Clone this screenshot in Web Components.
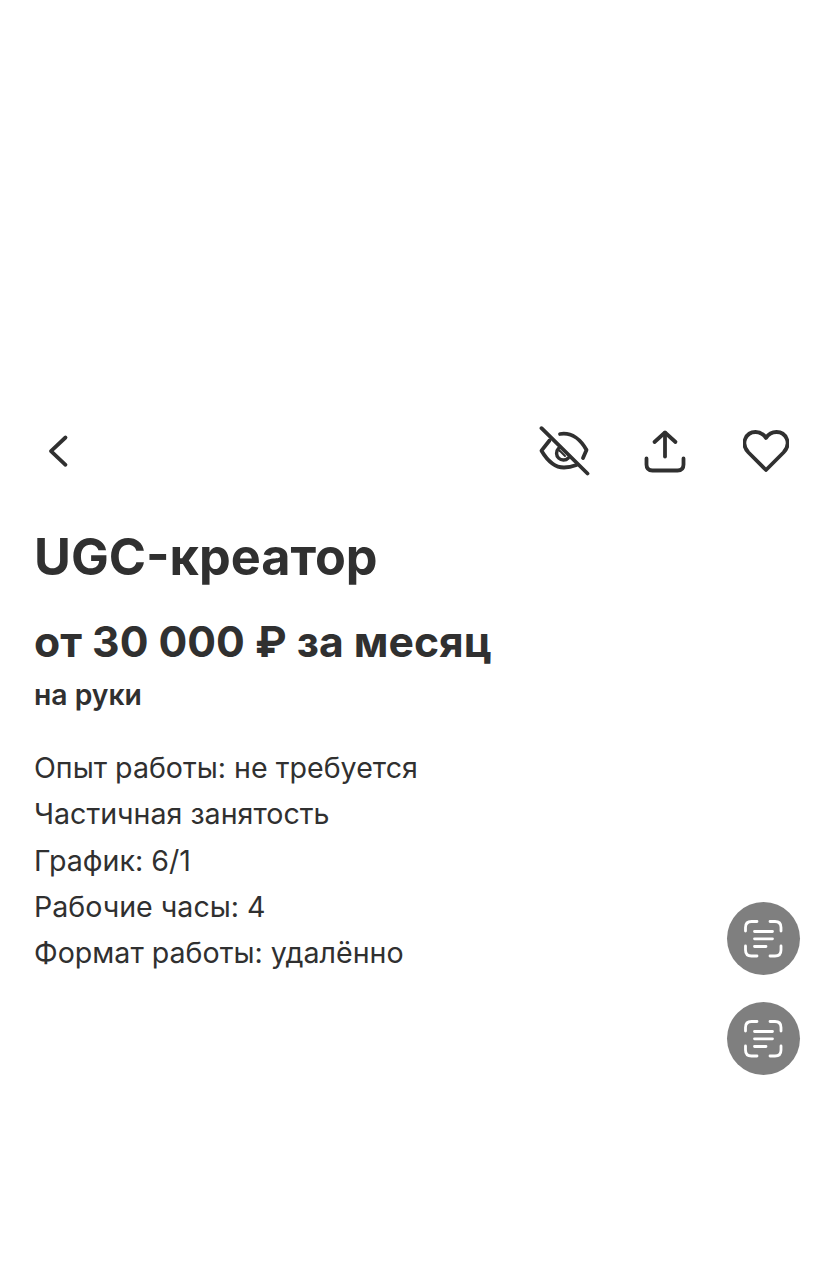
<!DOCTYPE html>
<html lang="ru"><head><meta charset="utf-8"><title>UGC-креатор</title>
<style>html,body{margin:0;background:#fff}body{width:825px;height:1280px;overflow:hidden;font-family:Inter,"Liberation Sans",sans-serif;color:#303030}</style>
</head><body>
<vacancy-page>
<app-toolbar slot="toolbar"></app-toolbar>
<vacancy-summary title-text="UGC-креатор" salary="от 30 000 ₽ за месяц" note="на руки">
<li>Опыт работы: не требуется</li><li>Частичная занятость</li><li>График: 6/1</li><li>Рабочие часы: 4</li><li>Формат работы: удалённо</li>
</vacancy-summary>
<scan-button style="top:902px"></scan-button>
<scan-button style="top:1002px"></scan-button>
</vacancy-page>
<script>
const def=(n,html,init)=>customElements.define(n,class extends HTMLElement{constructor(){super();this.attachShadow({mode:'open'}).innerHTML=html;}connectedCallback(){init&&init(this)}});
def('vacancy-page',`<style>:host{display:block;position:relative;width:825px;height:1280px;box-sizing:border-box;padding-top:423px}</style><slot name="toolbar"></slot><slot></slot>`);
def('app-toolbar',`<style>:host{display:flex;align-items:center;height:56px;padding:0 36px 0 43px}
svg{display:block;fill:none;stroke:#303030;stroke-width:3.800;stroke-linecap:round;stroke-linejoin:round}
.s{flex:1}</style>
<svg width="32" height="56" viewBox="0 0 32 56"><path d="M22.500 14.500 8 28.200 22.500 41.800"/></svg>
<div class="s"></div>
<svg width="52" height="52" viewBox="0 0 52 52"><path d="M3.500 3.200 49.500 48.500"/><path d="M11.500 15.500 3.500 25.700C9 35 16.500 42.500 26 42.500c4 0 8-.8 12.500-2.500"/><path d="M22 9c12-2 21 6 26.500 16l-3.500 8"/><path d="M20.500 23.500a6.800 6.800 0 0 0 9.800 9.500" stroke-width="3.400"/><path d="M21.500 25.500 27 31" stroke-width="2"/></svg>
<div style="width:53px"></div>
<svg width="44" height="44" viewBox="0 0 44 44"><path d="M22 27.500V4"/><path d="M11.500 13 22 3.500 32.500 13"/><path d="M3.500 29.500v6q0 6 6 6h25q6 0 6-6v-6"/></svg>
<div style="width:56px"></div>
<svg width="46" height="42" viewBox="0 0 46 42"><path d="M23 40 5.500 22.500C-3 13.500 3 2 12.500 2c4.500 0 8 2 10.500 6 2.500-4 6-6 10.500-6C43 2 49 13.500 40.500 22.500z"/></svg>`);
def('vacancy-summary',`<style>:host{display:block;padding:0 34px}
h1{margin:48px 0 0;font-size:50.400px;line-height:60px;font-weight:700}
h2{margin:30px 0 0;font-size:42.700px;line-height:50px;font-weight:700}
p{margin:11px 0 0;font-size:28.300px;line-height:34px;font-weight:600}
ul{margin:33px 0 0;padding:0;list-style:none;font-size:28.600px;line-height:46.300px;font-weight:400}
::slotted(li){list-style:none}
</style><h1 id="t"></h1><h2 id="s"></h2><p id="n"></p><ul><slot></slot></ul>`,el=>{const r=el.shadowRoot;r.getElementById('t').textContent=el.getAttribute('title-text');r.getElementById('s').textContent=el.getAttribute('salary');r.getElementById('n').textContent=el.getAttribute('note')});
def('scan-button',`<style>:host{display:block;position:absolute;left:726.500px;width:73px;height:73px;border-radius:50%;background:#7f7f7f}
svg{display:block;fill:none;stroke:#fff;stroke-width:2.800;stroke-linecap:round}</style>
<svg width="73" height="73" viewBox="0 0 73 73"><path d="M18.500 29v-3.500q0-6 6-6h5.500"/><path d="M43 19.500h5q6 0 6 6V29"/><path d="M18.500 44v4q0 6 6 6h5.500"/><path d="M54 44v4q0 6-6 6h-5"/><path d="M27.500 29.500h18M27.500 36.800h18M27.500 44.500h11.500"/></svg>`);
</script>
</body></html>
